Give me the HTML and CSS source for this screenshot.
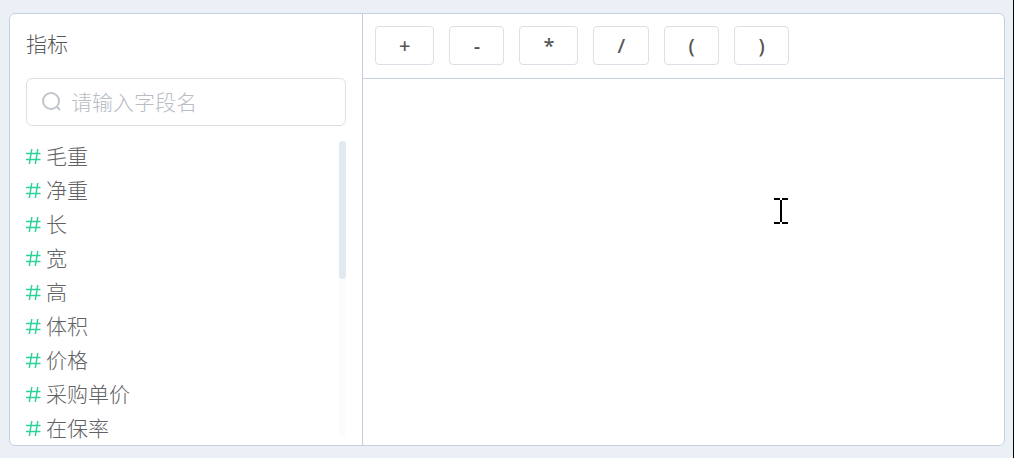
FILE: index.html
```html
<!DOCTYPE html>
<html lang="zh-CN">
<head>
    <meta charset="UTF-8">
    <meta name="viewport" content="width=device-width, initial-scale=1.0">
    <title>指标</title>
    <link rel="stylesheet" href="styles.css">
</head>
<body>
    <div class="panel">
        <div class="sidebar">
            <label class="title" for="search">指标</label>

            <div class="search-box">
                <svg class="search-icon" viewBox="0 0 20 20">
                    <circle cx="9" cy="9" r="8" />
                    <path d="M14.8 14.8 L18 18" />
                </svg>
                <input type="text" id="search" placeholder="请输入字段名">
            </div>

            <div class="field-area">
                <ul class="field-list">
                    <li><svg class="hash" viewBox="0 0 16 16"><path d="M0 5.5H14.5M0 11.5H14.5M5.8 1L3.3 16M11.8 1L9.3 16" /></svg>毛重</li>
                    <li><svg class="hash" viewBox="0 0 16 16"><path d="M0 5.5H14.5M0 11.5H14.5M5.8 1L3.3 16M11.8 1L9.3 16" /></svg>净重</li>
                    <li><svg class="hash" viewBox="0 0 16 16"><path d="M0 5.5H14.5M0 11.5H14.5M5.8 1L3.3 16M11.8 1L9.3 16" /></svg>长</li>
                    <li><svg class="hash" viewBox="0 0 16 16"><path d="M0 5.5H14.5M0 11.5H14.5M5.8 1L3.3 16M11.8 1L9.3 16" /></svg>宽</li>
                    <li><svg class="hash" viewBox="0 0 16 16"><path d="M0 5.5H14.5M0 11.5H14.5M5.8 1L3.3 16M11.8 1L9.3 16" /></svg>高</li>
                    <li><svg class="hash" viewBox="0 0 16 16"><path d="M0 5.5H14.5M0 11.5H14.5M5.8 1L3.3 16M11.8 1L9.3 16" /></svg>体积</li>
                    <li><svg class="hash" viewBox="0 0 16 16"><path d="M0 5.5H14.5M0 11.5H14.5M5.8 1L3.3 16M11.8 1L9.3 16" /></svg>价格</li>
                    <li><svg class="hash" viewBox="0 0 16 16"><path d="M0 5.5H14.5M0 11.5H14.5M5.8 1L3.3 16M11.8 1L9.3 16" /></svg>采购单价</li>
                    <li><svg class="hash" viewBox="0 0 16 16"><path d="M0 5.5H14.5M0 11.5H14.5M5.8 1L3.3 16M11.8 1L9.3 16" /></svg>在保率</li>
                </ul>
                <div class="scroll-track">
                    <div class="scroll-thumb"></div>
                </div>
            </div>
        </div>

        <div class="editor">
            <div class="toolbar">
                <button type="button">+</button>
                <button type="button">-</button>
                <button type="button">*</button>
                <button type="button">/</button>
                <button type="button">(</button>
                <button type="button">)</button>
            </div>
            <div class="formula">
                <svg class="cursor" viewBox="0 0 14 26">
                    <path d="M0 1H6M8 1H14M7 2V24M0 25H6M8 25H14" />
                </svg>
            </div>
        </div>
    </div>
</body>
</html>
```

FILE: styles.css
```css
* {
    box-sizing: border-box;
}

body {
    margin: 0;
    min-height: 100vh;
    padding: 13px 8px 12px 9px;
    border-right: 1px solid #000;
    background-color: #ebf0f7;
    color: #606266;
    font-family: "Noto Sans", "Noto Sans CJK SC", sans-serif;
    font-size: 21px;
    font-weight: 300;
}

.panel {
    display: flex;
    background: #fff;
    border: 1px solid #c5d0df;
    border-radius: 6px;
    overflow: hidden;
}

.sidebar {
    flex: 0 0 353px;
    min-width: 0;
    padding: 15px 16px 0;
    border-right: 1px solid #c5cddd;
}

.title {
    display: block;
    line-height: 30px;
    color: #555;
}

.search-box {
    display: flex;
    align-items: center;
    gap: 9px;
    height: 48px;
    margin-top: 19px;
    padding: 0 15px 1px;
    border: 1px solid #dcdfe6;
    border-radius: 6px;
}

.search-icon {
    width: 20px;
    height: 20px;
    fill: none;
    stroke: #c0c4cc;
    stroke-width: 2;
}

.search-box input {
    flex: 1;
    min-width: 0;
    padding: 0;
    border: none;
    outline: none;
    background: none;
    color: inherit;
    font: inherit;
}

.search-box input::placeholder {
    color: #b8bcc4;
}

.field-area {
    display: flex;
    margin-top: 13px;
}

.field-list {
    flex: 1;
    margin: 0;
    padding: 0;
    list-style: none;
}

.field-list li {
    display: flex;
    align-items: center;
    gap: 4px;
    height: 34px;
    line-height: 34px;
    color: #606266;
}

.hash {
    width: 16px;
    height: 16px;
    fill: none;
    stroke: #2fd09a;
    stroke-width: 1.5;
}

.scroll-track {
    width: 7px;
    margin: 2px 0 8px;
    background: #fcfcfd;
    border-radius: 4px;
}

.scroll-thumb {
    height: 138px;
    background: #e0e8f0;
    border-radius: 4px;
}

.editor {
    flex: 1;
    display: flex;
    flex-direction: column;
}

.toolbar {
    display: flex;
    gap: 15px;
    padding: 12px 12px 13px;
    border-bottom: 1px solid #c5d0df;
}

.toolbar button {
    min-width: 55px;
    height: 39px;
    padding: 0 23px;
    border: 1px solid #dcdfe6;
    border-radius: 4px;
    background: #fff;
    color: #555;
    font-family: "Noto Sans", sans-serif;
    font-size: 20px;
    font-weight: 500;
    cursor: pointer;
}

.formula {
    position: relative;
    flex: 1;
}

/* text pointer over the formula area */
.cursor {
    position: absolute;
    top: 119px;
    left: 411px;
    width: 14px;
    height: 26px;
    fill: none;
    stroke: #000;
    stroke-width: 2;
}
```
